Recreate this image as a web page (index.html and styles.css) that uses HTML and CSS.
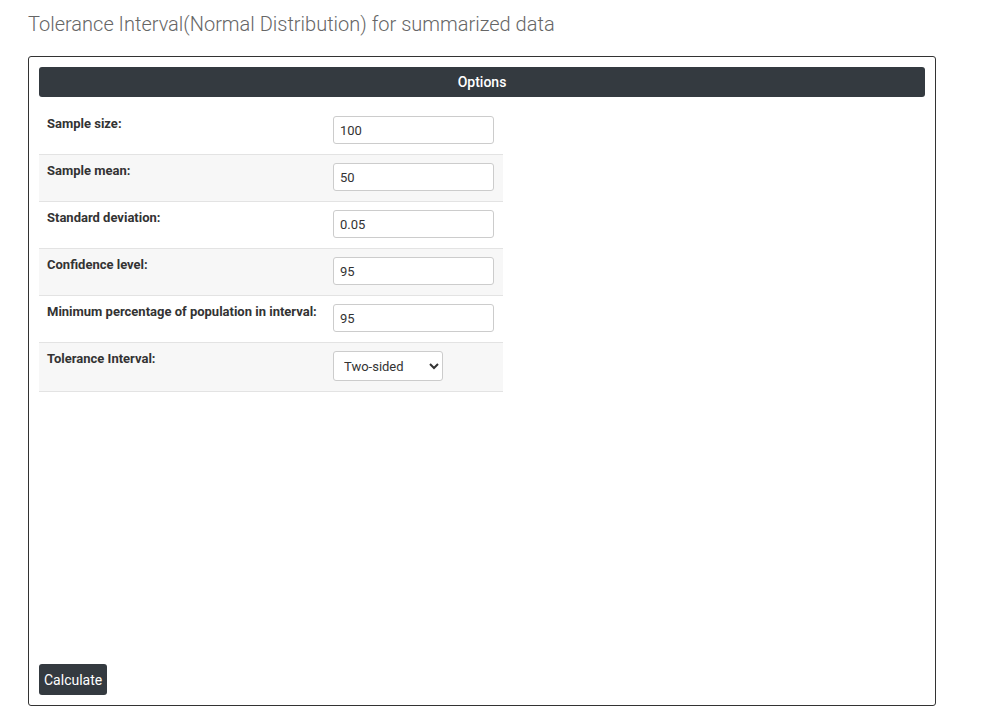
FILE: index.html
```html
<!DOCTYPE html>
<html>
<head>
<meta charset="utf-8">
<link rel="stylesheet" href="styles.css">
</head>
<body>
<div class="page">
  <h1 class="title">Tolerance Interval(Normal Distribution) for summarized data</h1>
  <div class="panel">
    <div class="panel-head">Options</div>
    <table class="opts">
      <colgroup>
        <col class="c1">
        <col class="c2">
      </colgroup>
      <tr>
        <td class="lbl">Sample size:</td>
        <td class="val"><input class="field" type="text" value="100"></td>
      </tr>
      <tr>
        <td class="lbl">Sample mean:</td>
        <td class="val"><input class="field" type="text" value="50"></td>
      </tr>
      <tr>
        <td class="lbl">Standard deviation:</td>
        <td class="val"><input class="field" type="text" value="0.05"></td>
      </tr>
      <tr>
        <td class="lbl">Confidence level:</td>
        <td class="val"><input class="field" type="text" value="95"></td>
      </tr>
      <tr>
        <td class="lbl">Minimum percentage of population in interval:</td>
        <td class="val"><input class="field" type="text" value="95"></td>
      </tr>
      <tr>
        <td class="lbl">Tolerance Interval:</td>
        <td class="val">
          <select class="pick">
            <option>Two-sided</option>
            <option>One-sided</option>
          </select>
        </td>
      </tr>
    </table>
    <div class="spacer"></div>
    <div class="actions"><button class="btn">Calculate</button></div>
  </div>
</div>
</body>
</html>
```

FILE: styles.css
```css
html, body {
  margin: 0;
  padding: 0;
  background: #fff;
}
body {
  font-family: Roboto, "Liberation Sans", Arial, sans-serif;
  color: #333;
}
.page {
  padding: 12px 46px 0 28px;
}
.title {
  margin: 0 0 20px 0;
  font-size: 20px;
  line-height: 24px;
  font-weight: 300;
  color: #666;
}
.panel {
  width: 886px;
  height: 628px;
  border: 1px solid #333;
  border-radius: 3px;
  padding: 10px;
  display: flex;
  flex-direction: column;
}
.panel-head {
  height: 30px;
  line-height: 30px;
  background: #343a40;
  color: #fff;
  border-radius: 3px;
  text-align: center;
  font-size: 14px;
  font-weight: 500;
}
.opts {
  margin-top: 11px;
  width: 464px;
  border-collapse: collapse;
  table-layout: fixed;
}
.c1 {
  width: 286px;
}
.c2 {
  width: 178px;
}
.opts tr {
  border-bottom: 1px solid #e3e3e3;
}
.opts tr:nth-child(even) {
  background: #f7f7f7;
}
.opts td {
  padding: 8px 8px 10px 8px;
  vertical-align: top;
}
.lbl {
  font-size: 13px;
  line-height: 15px;
  font-weight: 700;
  color: #333;
}
.field {
  display: block;
  box-sizing: border-box;
  width: 161px;
  height: 28px;
  margin: 0;
  padding: 0 6px;
  border: 1px solid #ccc;
  border-radius: 3px;
  background: #fff;
  font-family: Roboto, "Liberation Sans", Arial, sans-serif;
  font-size: 13px;
  color: #333;
}
.pick {
  display: block;
  box-sizing: border-box;
  width: 110px;
  height: 30px;
  margin: 0;
  padding: 0 6px;
  border: 1px solid #ccc;
  border-radius: 3px;
  background: #fff;
  font-family: Roboto, "Liberation Sans", Arial, sans-serif;
  font-size: 13px;
  color: #333;
}
.spacer {
  flex: 1;
}
.actions {
  display: flex;
}
.btn {
  height: 31px;
  padding: 0 5px;
  border: none;
  border-radius: 3px;
  background: #343a40;
  color: #fff;
  font-family: Roboto, "Liberation Sans", Arial, sans-serif;
  font-size: 14px;
}
```
